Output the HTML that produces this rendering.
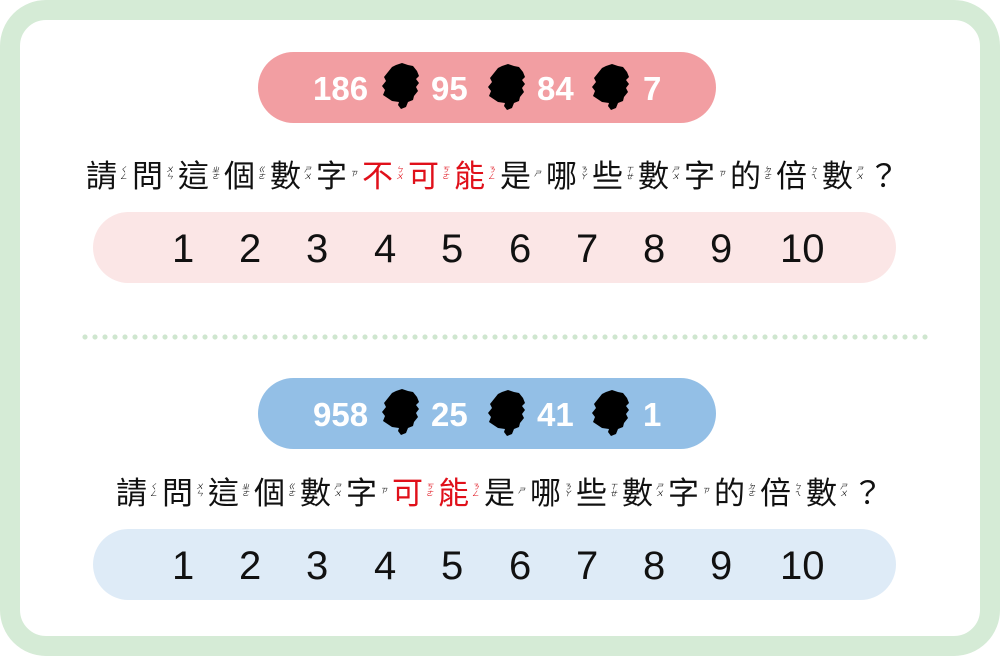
<!DOCTYPE html>
<html><head><meta charset="utf-8"><style>
body{margin:0;width:1000px;height:656px;background:#fff;position:relative;overflow:hidden;font-family:"Liberation Sans","Noto Sans CJK TC",sans-serif}
.frame{position:absolute;left:0;top:0;width:960px;height:616px;border:20px solid #d5ebd6;border-radius:46px;background:#fff}
.pill{position:absolute;left:258px;width:458px;height:71px;border-radius:36px}
.n{position:absolute;color:#fff;font-weight:bold;font-size:33px;line-height:33px}
.bar{position:absolute;left:93px;width:803px;height:71px;border-radius:36px}
.d{position:absolute;font-size:40px;line-height:40px;color:#111;font-family:"Liberation Sans",sans-serif}
.q{position:absolute;display:flex;align-items:center;height:40px;font-family:"Noto Sans CJK TC",sans-serif}
.u{display:flex;align-items:center;margin-right:2px}
.c{font-size:31px;line-height:36px;color:#111}
.z{display:flex;flex-direction:column;font-size:7px;line-height:7px;width:13px;align-items:center;color:#111}
.r .c,.r .z{color:#e0101a}
.dots{position:absolute;left:80px;top:334px;width:848px;height:6px;background:radial-gradient(circle,#cfe6cf 2.3px,transparent 2.8px) 0 0/10px 6px}
</style></head><body>
<div class="frame"></div>
<svg width="0" height="0" style="position:absolute"><defs><path id="b" d="M12,5 L16,3 L22,1 L28,3 L33,4 L37,9 L39,14 L36,17 L39,21 L36,25 L38,29 L34,34 L33,38 L28,40 L26,45 L21,47 L18,43 L19,40 L12,39 L6,35 L3,33 L5,28 L2,24 L6,19 L4,15 L8,10 Z"/></defs></svg>

<div class="pill" style="top:52px;background:#f29ea2"></div>
<div class="n" style="left:313px;top:72px">186</div>
<div class="n" style="left:431px;top:72px">95</div>
<div class="n" style="left:537px;top:72px">84</div>
<div class="n" style="left:643px;top:72px">7</div>
<svg style="position:absolute;left:380px;top:62px" width="44" height="50"><use href="#b"/></svg>
<svg style="position:absolute;left:486px;top:63px" width="44" height="50"><use href="#b"/></svg>
<svg style="position:absolute;left:590px;top:63px" width="44" height="50"><use href="#b"/></svg>

<div class="q" style="left:86px;top:154px">
<div class="u"><span class="c">請</span><span class="z"><i>ㄑ</i><i>ㄥ</i></span></div>
<div class="u"><span class="c">問</span><span class="z"><i>ㄨ</i><i>ㄣ</i></span></div>
<div class="u"><span class="c">這</span><span class="z"><i>ㄓ</i><i>ㄜ</i></span></div>
<div class="u"><span class="c">個</span><span class="z"><i>ㄍ</i><i>ㄜ</i></span></div>
<div class="u"><span class="c">數</span><span class="z"><i>ㄕ</i><i>ㄨ</i></span></div>
<div class="u"><span class="c">字</span><span class="z"><i>ㄗ</i></span></div>
<div class="u r"><span class="c">不</span><span class="z"><i>ㄅ</i><i>ㄨ</i></span></div>
<div class="u r"><span class="c">可</span><span class="z"><i>ㄎ</i><i>ㄜ</i></span></div>
<div class="u r"><span class="c">能</span><span class="z"><i>ㄋ</i><i>ㄥ</i></span></div>
<div class="u"><span class="c">是</span><span class="z"><i>ㄕ</i></span></div>
<div class="u"><span class="c">哪</span><span class="z"><i>ㄋ</i><i>ㄚ</i></span></div>
<div class="u"><span class="c">些</span><span class="z"><i>ㄒ</i><i>ㄝ</i></span></div>
<div class="u"><span class="c">數</span><span class="z"><i>ㄕ</i><i>ㄨ</i></span></div>
<div class="u"><span class="c">字</span><span class="z"><i>ㄗ</i></span></div>
<div class="u"><span class="c">的</span><span class="z"><i>ㄉ</i><i>ㄜ</i></span></div>
<div class="u"><span class="c">倍</span><span class="z"><i>ㄅ</i><i>ㄟ</i></span></div>
<div class="u"><span class="c">數</span><span class="z"><i>ㄕ</i><i>ㄨ</i></span></div>
<div class="u"><span class="c">？</span></div>
</div>

<div class="bar" style="top:212px;background:#fbe6e6"></div>
<div class="d" style="left:172px;top:229px">1</div><div class="d" style="left:239px;top:229px">2</div><div class="d" style="left:306px;top:229px">3</div><div class="d" style="left:374px;top:229px">4</div><div class="d" style="left:441px;top:229px">5</div><div class="d" style="left:509px;top:229px">6</div><div class="d" style="left:576px;top:229px">7</div><div class="d" style="left:643px;top:229px">8</div><div class="d" style="left:710px;top:229px">9</div><div class="d" style="left:780px;top:229px">10</div>

<div class="dots"></div>

<div class="pill" style="top:378px;background:#93bfe6"></div>
<div class="n" style="left:313px;top:398px">958</div>
<div class="n" style="left:431px;top:398px">25</div>
<div class="n" style="left:537px;top:398px">41</div>
<div class="n" style="left:643px;top:398px">1</div>
<svg style="position:absolute;left:380px;top:388px" width="44" height="50"><use href="#b"/></svg>
<svg style="position:absolute;left:486px;top:389px" width="44" height="50"><use href="#b"/></svg>
<svg style="position:absolute;left:590px;top:389px" width="44" height="50"><use href="#b"/></svg>

<div class="q" style="left:116px;top:471px">
<div class="u"><span class="c">請</span><span class="z"><i>ㄑ</i><i>ㄥ</i></span></div>
<div class="u"><span class="c">問</span><span class="z"><i>ㄨ</i><i>ㄣ</i></span></div>
<div class="u"><span class="c">這</span><span class="z"><i>ㄓ</i><i>ㄜ</i></span></div>
<div class="u"><span class="c">個</span><span class="z"><i>ㄍ</i><i>ㄜ</i></span></div>
<div class="u"><span class="c">數</span><span class="z"><i>ㄕ</i><i>ㄨ</i></span></div>
<div class="u"><span class="c">字</span><span class="z"><i>ㄗ</i></span></div>
<div class="u r"><span class="c">可</span><span class="z"><i>ㄎ</i><i>ㄜ</i></span></div>
<div class="u r"><span class="c">能</span><span class="z"><i>ㄋ</i><i>ㄥ</i></span></div>
<div class="u"><span class="c">是</span><span class="z"><i>ㄕ</i></span></div>
<div class="u"><span class="c">哪</span><span class="z"><i>ㄋ</i><i>ㄚ</i></span></div>
<div class="u"><span class="c">些</span><span class="z"><i>ㄒ</i><i>ㄝ</i></span></div>
<div class="u"><span class="c">數</span><span class="z"><i>ㄕ</i><i>ㄨ</i></span></div>
<div class="u"><span class="c">字</span><span class="z"><i>ㄗ</i></span></div>
<div class="u"><span class="c">的</span><span class="z"><i>ㄉ</i><i>ㄜ</i></span></div>
<div class="u"><span class="c">倍</span><span class="z"><i>ㄅ</i><i>ㄟ</i></span></div>
<div class="u"><span class="c">數</span><span class="z"><i>ㄕ</i><i>ㄨ</i></span></div>
<div class="u"><span class="c">？</span></div>
</div>

<div class="bar" style="top:529px;background:#deebf7"></div>
<div class="d" style="left:172px;top:546px">1</div><div class="d" style="left:239px;top:546px">2</div><div class="d" style="left:306px;top:546px">3</div><div class="d" style="left:374px;top:546px">4</div><div class="d" style="left:441px;top:546px">5</div><div class="d" style="left:509px;top:546px">6</div><div class="d" style="left:576px;top:546px">7</div><div class="d" style="left:643px;top:546px">8</div><div class="d" style="left:710px;top:546px">9</div><div class="d" style="left:780px;top:546px">10</div>
</body></html>
